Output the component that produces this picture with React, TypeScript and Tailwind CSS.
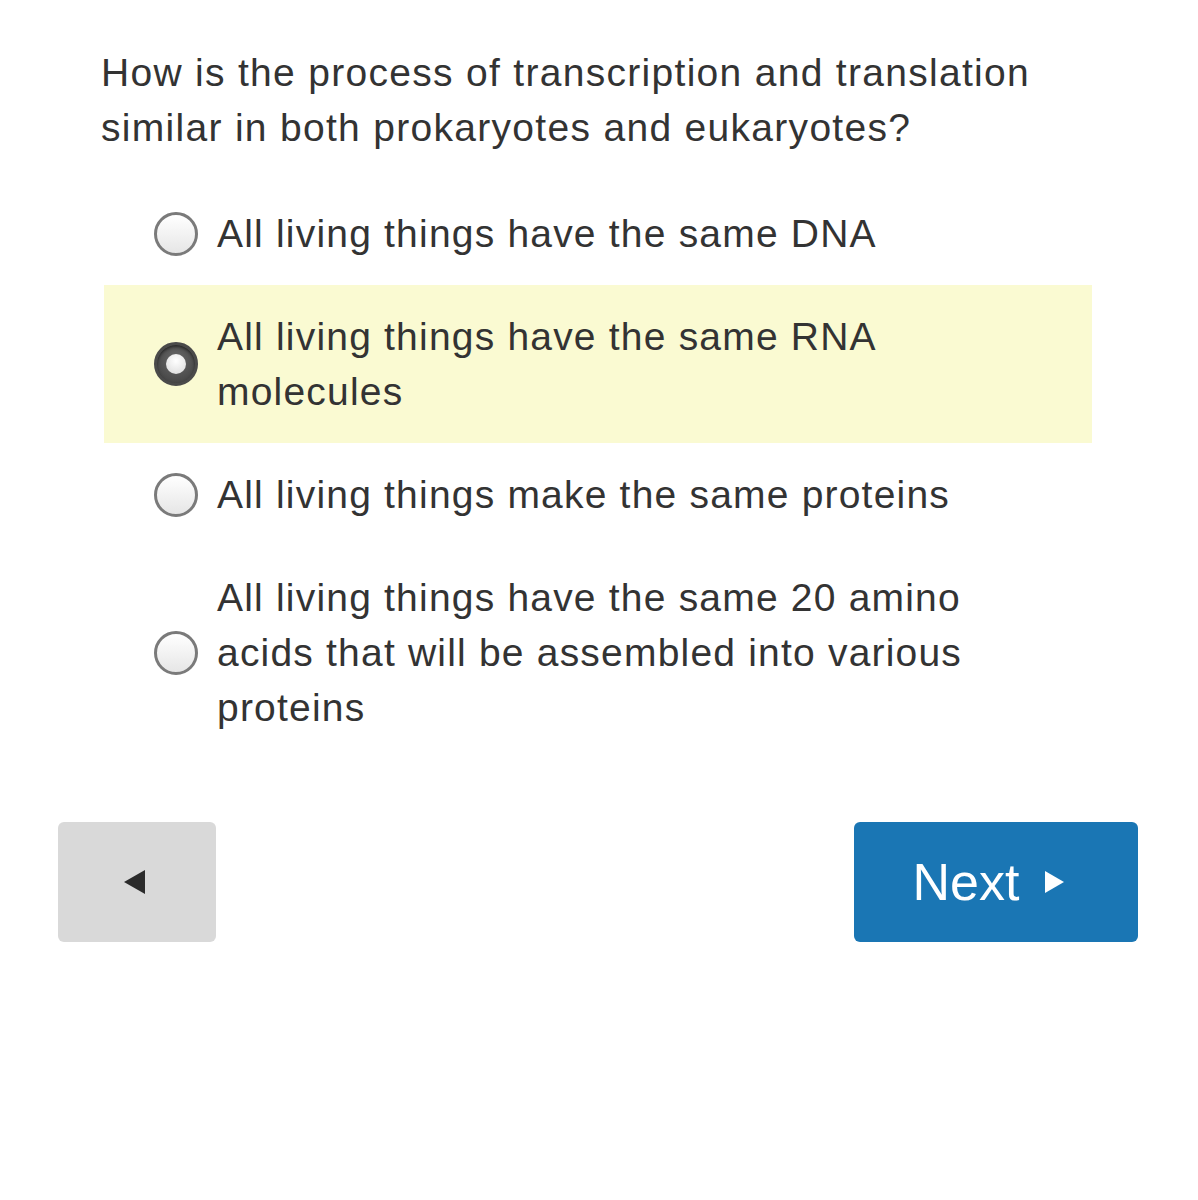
import React from "react";

const font = { fontFamily: '"Liberation Sans", Arial, Helvetica, sans-serif' };

function Radio({ checked }: { checked?: boolean }) {
  if (checked) {
    return (
      <div className="w-[44px] h-[44px] rounded-full shrink-0 flex items-center justify-center bg-[radial-gradient(circle_at_50%_40%,#6a6a6a,#3c3c3c)] border-[3px] border-[#4a4a4a] shadow-[inset_0_2px_3px_rgba(0,0,0,0.5)]">
        <div className="w-[20px] h-[20px] rounded-full bg-[radial-gradient(circle_at_50%_35%,#ffffff,#d8d8d8)]" />
      </div>
    );
  }
  return (
    <div className="w-[44px] h-[44px] rounded-full shrink-0 border-[3px] border-[#7a7a7a] bg-[linear-gradient(180deg,#ffffff,#e6e6e6)]" />
  );
}

function Option({ lines, checked }: { lines: string[]; checked?: boolean }) {
  return (
    <div
      className={`flex items-center pl-[50px] pr-6 py-[24px] ${checked ? "bg-[#fafad2]" : ""}`}
    >
      <Radio checked={checked} />
      <div className="ml-[19px] text-[39px] leading-[55px] tracking-[1.2px] text-[#333333] whitespace-nowrap">
        {lines.map((l, i) => (
          <div key={i}>{l}</div>
        ))}
      </div>
    </div>
  );
}

export default function App() {
  return (
    <div className="w-[1198px] h-[1200px] bg-white relative" style={font}>
      <div className="pt-[45px] pl-[101px] text-[39px] leading-[55px] tracking-[1.3px] text-[#333333] whitespace-nowrap">
        <div>How is the process of transcription and translation</div>
        <div>similar in both prokaryotes and eukaryotes?</div>
      </div>
      <div className="mt-[27px] ml-[104px] w-[988px]">
        <Option lines={["All living things have the same DNA"]} />
        <Option lines={["All living things have the same RNA", "molecules"]} checked />
        <Option lines={["All living things make the same proteins"]} />
        <Option
          lines={[
            "All living things have the same 20 amino",
            "acids that will be assembled into various",
            "proteins",
          ]}
        />
      </div>
      <div className="mt-[63px] flex justify-between pl-[58px] pr-[60px]">
        <button className="w-[158px] h-[120px] rounded-[6px] bg-[#d9d9d9] flex items-center justify-center">
          <svg width="22" height="24" viewBox="0 0 22 24" className="-ml-[4px]">
            <polygon points="0,12 21,0 21,24" fill="#2b2b2b" />
          </svg>
        </button>
        <button className="w-[284px] h-[120px] rounded-[6px] bg-[#1a76b4] flex items-center justify-center text-white text-[52px] pr-[14px]">
          <span>Next</span>
          <svg width="20" height="22" viewBox="0 0 20 22" className="ml-[26px]">
            <polygon points="0,0 19,11 0,22" fill="#ffffff" />
          </svg>
        </button>
      </div>
    </div>
  );
}
